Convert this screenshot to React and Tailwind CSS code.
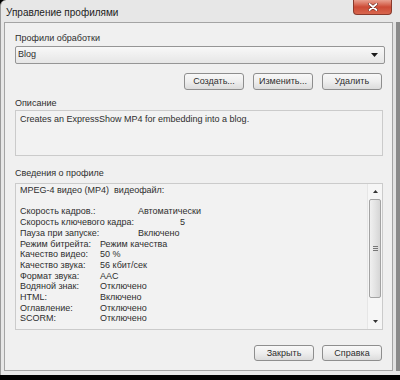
import React from "react";

const details = [
  { label: "Скорость кадров.:", value: "Автоматически", pad: "pl-[38px]" },
  { label: "Скорость ключевого кадра:", value: "5", pad: "pl-[80px]" },
  { label: "Пауза при запуске:", value: "Включено", pad: "pl-[38px]" },
  { label: "Режим битрейта:", value: "Режим качества", pad: "" },
  { label: "Качество видео:", value: "50 %", pad: "" },
  { label: "Качество звука:", value: "56 кбит/сек", pad: "" },
  { label: "Формат звука:", value: "AAC", pad: "" },
  { label: "Водяной знак:", value: "Отключено", pad: "" },
  { label: "HTML:", value: "Включено", pad: "" },
  { label: "Оглавление:", value: "Отключено", pad: "" },
  { label: "SCORM:", value: "Отключено", pad: "" },
];

// win7-style push button
const Btn = ({ children }) => (
  <button className="w-[60px] h-full rounded-[3px] border border-[#8e8e8e] bg-gradient-to-b from-[#f8f8f8] via-[#eeeeee] to-[#dcdcdc] text-[9px] leading-none text-[#2e2e2e] flex items-center justify-center">
    {children}
  </button>
);

export default function App() {
  return (
    <div className="w-[400px] h-[380px] bg-black overflow-hidden font-['Liberation_Sans',Arial,sans-serif] text-[9px] text-[#2e2e2e]">
      <div className="w-[400px] h-[375px] bg-[#e7e7e7] border-l border-[#9a9a9a] rounded-tl-[6px] flex flex-col">
        {/* Title bar */}
        <div className="h-[22px] flex items-start justify-between pl-[5px] pr-[8px]">
          <span className="text-[10px] leading-[11px] mt-[7px] text-[#222]">Управление профилями</span>
          <button className="w-[39px] h-[15px] rounded-b-[4px] border border-t-0 border-[#8a3a2c] bg-gradient-to-b from-[#e8a090] via-[#cc4a35] to-[#d8664e] flex items-center justify-center">
            <svg width="10" height="8" viewBox="0 0 10 8">
              <path d="M1.5 1 L8.5 7 M8.5 1 L1.5 7" stroke="#6b2a20" strokeWidth="3" strokeLinecap="round" />
              <path d="M1.5 1 L8.5 7 M8.5 1 L1.5 7" stroke="#ffffff" strokeWidth="1.8" strokeLinecap="round" />
            </svg>
          </button>
        </div>

        <div className="flex">
          <div className="w-[3px]" />
          {/* Client area */}
          <div className="w-[389px] h-[349px] border border-[#a4a4a4] bg-[#f0f0f0] flex flex-col pl-[10px] pr-[7px] pt-[10px]">
            <div className="h-[11px] leading-[11px]">Профили обработки</div>
            <div className="mt-[2px] h-[18px] rounded-[2px] border border-[#959595] bg-gradient-to-b from-[#f8f8f8] to-[#e6e6e6] flex items-center justify-between pl-[2px] pr-[6px]">
              <span>Blog</span>
              <svg width="7" height="4" viewBox="0 0 7 4">
                <path d="M0 0 L7 0 L3.5 4 Z" fill="#1a1a1a" />
              </svg>
            </div>
            <div className="mt-[9px] h-[17px] flex justify-end gap-[9px] pr-[3px]">
              <Btn>Создать...</Btn>
              <Btn>Изменить...</Btn>
              <Btn>Удалить</Btn>
            </div>

            <div className="mt-[8px] h-[11px] leading-[11px]">Описание</div>
            <div className="mt-[1px] h-[46px] w-[368px] border border-[#cbcbcb] bg-[#f2f2f2] pl-[4px] pt-[3px] leading-[11px]">
              Creates an ExpressShow MP4 for embedding into a blog.
            </div>

            <div className="mt-[12px] h-[11px] leading-[11px]">Сведения о профиле</div>
            <div className="mt-[4px] h-[147px] w-[368px] border border-[#cbcbcb] bg-[#f2f2f2] flex">
              <div className="flex-1 pl-[4px] pt-[1px] leading-[10.7px]">
                <div>MPEG-4 видео (MP4)&nbsp;&nbsp;видеофайл:</div>
                <div className="h-[10.7px]" />
                {details.map((d) => (
                  <div key={d.label} className="flex">
                    <span className="w-[80px] shrink-0 whitespace-nowrap">{d.label}</span>
                    <span className={d.pad}>{d.value}</span>
                  </div>
                ))}
              </div>
              {/* Scrollbar */}
              <div className="w-[15px] h-full bg-[#f6f6f6] border-l border-[#e6e6e6] flex flex-col">
                <div className="h-[15px] flex items-center justify-center">
                  <svg width="5" height="3" viewBox="0 0 5 3">
                    <path d="M0 3 L5 3 L2.5 0 Z" fill="#333" />
                  </svg>
                </div>
                <div className="h-[99px] mx-[1px] rounded-[2px] border border-[#a3a3a3] bg-gradient-to-r from-[#f0f0f0] via-[#e4e4e4] to-[#d6d6d6] flex flex-col items-center justify-center gap-[1px]">
                  <div className="w-[5px] h-px bg-[#777]" />
                  <div className="w-[5px] h-px bg-[#777]" />
                  <div className="w-[5px] h-px bg-[#777]" />
                </div>
                <div className="flex-1" />
                <div className="h-[15px] flex items-center justify-center">
                  <svg width="5" height="3" viewBox="0 0 5 3">
                    <path d="M0 0 L5 0 L2.5 3 Z" fill="#333" />
                  </svg>
                </div>
              </div>
            </div>

            <div className="mt-[15px] h-[16px] flex justify-end gap-[8px] pr-[3px]">
              <Btn>Закрыть</Btn>
              <Btn>Справка</Btn>
            </div>
          </div>
          {/* right frame */}
          <div className="w-[3px] bg-[#e2e2e2]" />
          <div className="w-[4px] bg-[#8a8a8a]" />
        </div>
      </div>
    </div>
  );
}
